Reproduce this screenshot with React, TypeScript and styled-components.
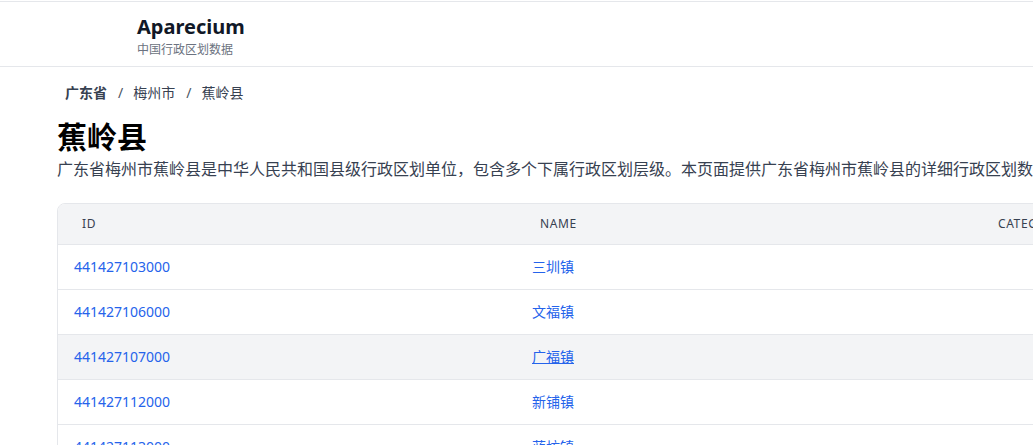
import React from "react";
import styled, { createGlobalStyle } from "styled-components";

const GlobalStyle = createGlobalStyle`
  html, body {
    margin: 0;
    padding: 0;
    overflow: hidden;
    background: #ffffff;
  }
  body {
    font-family: "Segoe UI", "Noto Sans", "Noto Sans CJK SC", sans-serif;
    color: #111827;
  }
  * {
    box-sizing: border-box;
  }
`;

const Page = styled.div`
  width: 1490px;
  padding-top: 1px;
`;

const Header = styled.header`
  border-top: 1px solid #e5e7eb;
  border-bottom: 1px solid #e5e7eb;
  padding: 10px 0 8px 137px;
  display: flex;
  flex-direction: column;
`;

const Brand = styled.h1`
  margin: 0;
  font-size: 20px;
  line-height: 30px;
  font-weight: 700;
  color: #111827;
`;

const Tagline = styled.p`
  margin: 0;
  font-size: 12px;
  line-height: 16px;
  color: #6b7280;
`;

const Main = styled.main`
  padding: 16px 57px 0;
`;

const Breadcrumb = styled.nav`
  display: flex;
  align-items: center;
  padding-left: 8px;
  font-size: 14px;
  line-height: 20px;
  color: #374151;
`;

const Crumb = styled.span<{ $strong?: boolean }>`
  font-weight: ${(p) => (p.$strong ? 600 : 400)};
`;

const Separator = styled.span`
  margin: 0 10px 0 11px;
  color: #4b5563;
`;

const Title = styled.h2`
  margin: 16px 0 0;
  font-size: 30px;
  line-height: 36px;
  font-weight: 700;
  color: #000000;
`;

const Description = styled.p`
  margin: 2px 0 0;
  font-size: 16px;
  line-height: 24px;
  color: #374151;
  white-space: nowrap;
`;

const TableWrap = styled.div`
  margin-top: 22px;
  border: 1px solid #e5e7eb;
  border-radius: 8px;
  overflow: hidden;
`;

const Table = styled.table`
  width: 100%;
  border-collapse: collapse;
  table-layout: fixed;
`;

const HeadCell = styled.th`
  background: #f3f4f6;
  padding: 12px 24px;
  text-align: left;
  font-size: 12px;
  line-height: 16px;
  font-weight: 400;
  letter-spacing: 0.05em;
  text-transform: uppercase;
  color: #374151;
  border-bottom: 1px solid #e5e7eb;
`;

const Row = styled.tr<{ $hover?: boolean }>`
  background: ${(p) => (p.$hover ? "#f3f4f6" : "#ffffff")};
  border-bottom: 1px solid #e5e7eb;
`;

const Cell = styled.td`
  padding: 12px 16px;
  font-size: 14px;
  line-height: 20px;
  color: #2563eb;
`;

const Link = styled.a<{ $hover?: boolean }>`
  color: #2563eb;
  text-decoration: ${(p) => (p.$hover ? "underline" : "none")};
`;

const towns = [
  { id: "441427103000", name: "三圳镇" },
  { id: "441427106000", name: "文福镇" },
  { id: "441427107000", name: "广福镇" },
  { id: "441427112000", name: "新铺镇" },
  { id: "441427113000", name: "蓝坊镇" },
];

const HOVER_ID = "441427107000";

export default function App() {
  return (
    <Page>
      <GlobalStyle />
      <Header>
        <Brand>Aparecium</Brand>
        <Tagline>中国行政区划数据</Tagline>
      </Header>
      <Main>
        <Breadcrumb>
          <Crumb $strong>广东省</Crumb>
          <Separator>/</Separator>
          <Crumb>梅州市</Crumb>
          <Separator>/</Separator>
          <Crumb>蕉岭县</Crumb>
        </Breadcrumb>
        <Title>蕉岭县</Title>
        <Description>
          广东省梅州市蕉岭县是中华人民共和国县级行政区划单位，包含多个下属行政区划层级。本页面提供广东省梅州市蕉岭县的详细行政区划数据。
        </Description>
        <TableWrap>
          <Table>
            <colgroup>
              <col style={{ width: 458 }} />
              <col style={{ width: 458 }} />
              <col />
            </colgroup>
            <thead>
              <tr>
                <HeadCell>ID</HeadCell>
                <HeadCell>Name</HeadCell>
                <HeadCell>Category</HeadCell>
              </tr>
            </thead>
            <tbody>
              {towns.map((t) => {
                const hover = t.id === HOVER_ID;
                return (
                  <Row key={t.id} $hover={hover}>
                    <Cell>
                      <Link href="#">{t.id}</Link>
                    </Cell>
                    <Cell>
                      <Link href="#" $hover={hover}>
                        {t.name}
                      </Link>
                    </Cell>
                    <Cell />
                  </Row>
                );
              })}
            </tbody>
          </Table>
        </TableWrap>
      </Main>
    </Page>
  );
}
